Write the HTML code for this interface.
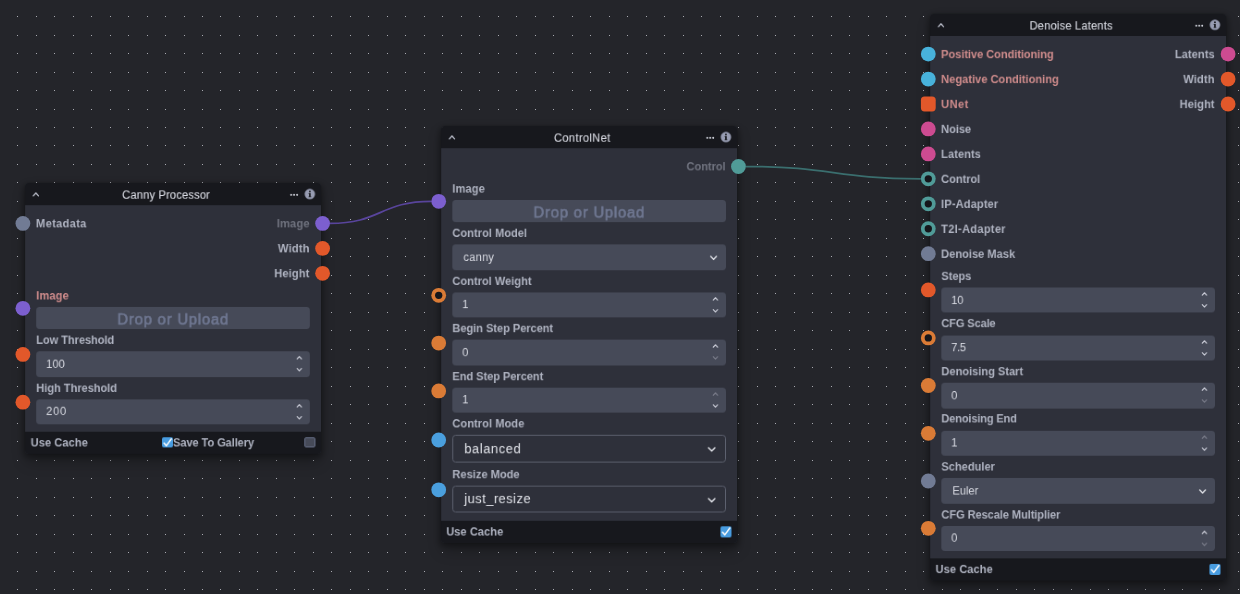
<!DOCTYPE html>
<html lang="en"><head><meta charset="utf-8"><title>Workflow Editor</title>
<style>

*{box-sizing:border-box;margin:0;padding:0}
html,body{width:1240px;height:594px;overflow:hidden;background:#24252a}
body{position:relative;font-family:"Liberation Sans",sans-serif;color:#afb3c1}
svg.bg,svg.edges{position:absolute;left:0;top:0;width:1240px;height:594px}
.vp{position:absolute;left:0;top:0;width:0;height:0;transform-origin:0 0;will-change:transform}


.node{position:absolute;left:0;top:0;background:#2e303a;font-size:12.006px;width:319.632px;border-radius:4.002px;box-shadow:0 0 0 0.541px rgba(0,0,0,.1),0 2.163px 6.49px 1.082px rgba(0,0,0,.3),0 8.653px 16.225px rgba(0,0,0,.24)}
.hdr{position:relative;height:24px;background:#17181d;border-radius:4.002px 4.002px 0 0}
.hdr .ttl{position:absolute;left:0;right:14.819px;top:0;height:24px;line-height:26.933px;text-align:center;font-size:12.006px;-webkit-text-stroke:0.13px #d6d8e0;color:#d6d8e0;white-space:nowrap}
.hdr svg{position:absolute;overflow:visible}
.body{background:#2e303a;padding:6px 0 5.949px;position:relative}
.row{position:relative;height:27px;display:flex;align-items:center;justify-content:space-between;padding:0 12.006px 0 11.844px;font-weight:700;white-space:nowrap}
.row span{display:block;line-height:17.307px;position:relative;top:1.082px}
.dim{opacity:.5}
.err{color:#cf8c8c}
.h{position:absolute;width:16px;height:16px;border-radius:50%;top:50%;margin-top:-8.5px}
.fld .h{margin-top:-8.275px}
.h.l{left:-10.276px}
.h.r{right:-10.059px}
.h.ring{background:#1b1c21 !important;border:4.651px solid}
.h.sq{border-radius:3.245px}
.fld{position:relative;padding:0 11.628px 1.893px}
.row + .fld{margin-top:0.757px}
.fld .lb{height:22.228px;line-height:21.309px;font-weight:700;white-space:nowrap;margin-left:0.487px}
.fld .lb span,.val span,.ftr span,.ttl span,.drop span{display:inline-block}
.in{position:relative;height:27.474px;background:#464a58;border-radius:3.678px}
.in .val{position:absolute;left:11.141px;top:0.541px;line-height:27.474px;color:#d9dbe3;white-space:nowrap}
.in.sel .val{left:12.439px}
.in svg{position:absolute;overflow:visible}
.drop{height:24.554px;margin-top:-0.216px;margin-bottom:-0.216px;background:#464a58;border-radius:3.678px;text-align:center;font-size:16.009px;line-height:27.366px;color:#6f7791;-webkit-text-stroke:0.703px #6f7791;white-space:nowrap;overflow:hidden;font-weight:400}
.nsel{position:relative;margin-top:-0.487px;margin-bottom:1.082px;height:29.854px;border:1.028px solid #5d616f;border-radius:3.678px;background:#2e303a}
.nsel .val{position:absolute;left:12.331px;top:-0.216px;line-height:29.746px;font-size:13.953px;color:#e2e4ea;white-space:nowrap}
.nsel svg{position:absolute;overflow:visible}
.ftr{position:relative;height:23.58px;background:#17181d;border-radius:0 0 4.002px 4.002px;font-weight:700;white-space:nowrap}
.ftr .t{position:absolute;top:0.541px;line-height:23.58px}
.cb{position:absolute;top:5.733px;width:11.682px;height:11.682px;border-radius:1.947px}
.cb.on{background:#489ce0}
.cb.off{background:#464a58;border:1.839px solid #687089}
.cb svg{position:absolute;left:0;top:0;width:11.682px;height:11.682px;overflow:visible}

</style></head><body>
<svg class="bg" shape-rendering="crispEdges"><defs><path id="dc" d="M0 16h1v1h-1zM0 35h1v1h-1zM0 53h1v1h-1zM0 72h1v1h-1zM0 90h1v1h-1zM0 109h1v1h-1zM0 127h1v1h-1zM0 145h1v1h-1zM0 164h1v1h-1zM0 182h1v1h-1zM0 201h1v1h-1zM0 219h1v1h-1zM0 238h1v1h-1zM0 256h1v1h-1zM0 275h1v1h-1zM0 293h1v1h-1zM0 312h1v1h-1zM0 330h1v1h-1zM0 349h1v1h-1zM0 367h1v1h-1zM0 386h1v1h-1zM0 404h1v1h-1zM0 423h1v1h-1zM0 441h1v1h-1zM0 460h1v1h-1zM0 478h1v1h-1zM0 497h1v1h-1zM0 515h1v1h-1zM0 534h1v1h-1zM0 552h1v1h-1zM0 571h1v1h-1zM0 589h1v1h-1z" fill="#a9aab1"></path></defs><use href="#dc" x="17"></use><use href="#dc" x="36"></use><use href="#dc" x="54"></use><use href="#dc" x="73"></use><use href="#dc" x="91"></use><use href="#dc" x="110"></use><use href="#dc" x="128"></use><use href="#dc" x="147"></use><use href="#dc" x="165"></use><use href="#dc" x="184"></use><use href="#dc" x="202"></use><use href="#dc" x="220"></use><use href="#dc" x="239"></use><use href="#dc" x="257"></use><use href="#dc" x="276"></use><use href="#dc" x="294"></use><use href="#dc" x="313"></use><use href="#dc" x="331"></use><use href="#dc" x="350"></use><use href="#dc" x="368"></use><use href="#dc" x="387"></use><use href="#dc" x="405"></use><use href="#dc" x="424"></use><use href="#dc" x="442"></use><use href="#dc" x="461"></use><use href="#dc" x="479"></use><use href="#dc" x="498"></use><use href="#dc" x="516"></use><use href="#dc" x="535"></use><use href="#dc" x="553"></use><use href="#dc" x="572"></use><use href="#dc" x="590"></use><use href="#dc" x="609"></use><use href="#dc" x="627"></use><use href="#dc" x="646"></use><use href="#dc" x="664"></use><use href="#dc" x="683"></use><use href="#dc" x="701"></use><use href="#dc" x="720"></use><use href="#dc" x="738"></use><use href="#dc" x="757"></use><use href="#dc" x="775"></use><use href="#dc" x="794"></use><use href="#dc" x="812"></use><use href="#dc" x="831"></use><use href="#dc" x="849"></use><use href="#dc" x="868"></use><use href="#dc" x="886"></use><use href="#dc" x="905"></use><use href="#dc" x="923"></use><use href="#dc" x="942"></use><use href="#dc" x="960"></use><use href="#dc" x="979"></use><use href="#dc" x="997"></use><use href="#dc" x="1016"></use><use href="#dc" x="1034"></use><use href="#dc" x="1053"></use><use href="#dc" x="1071"></use><use href="#dc" x="1090"></use><use href="#dc" x="1108"></use><use href="#dc" x="1127"></use><use href="#dc" x="1145"></use><use href="#dc" x="1164"></use><use href="#dc" x="1182"></use><use href="#dc" x="1201"></use><use href="#dc" x="1219"></use><use href="#dc" x="1238"></use></svg>
<div class="vp" style="transform:translate(25.1px,183.0px) scale(0.9245)"><div class="node"><div class="hdr"><svg viewBox="0 0 295.5 21.6" style="width:319.632px;height:23.364px;left:0;top:0.324px"><path d="M8.20 12.85L10.75 9.95L13.30 12.85" fill="none" stroke="#c0c3d0" stroke-width="1.2" stroke-linecap="round" stroke-linejoin="round"></path><circle cx="266.10" cy="11.9" r="0.95" fill="#d5d7e0"></circle><circle cx="269.05" cy="11.9" r="0.95" fill="#d5d7e0"></circle><circle cx="272.00" cy="11.9" r="0.95" fill="#d5d7e0"></circle><circle cx="284.75" cy="11.05" r="5.2" fill="#979cb2"></circle><circle cx="284.75" cy="8.600000000000001" r="0.95" fill="#17181d"></circle><path d="M283.45 10.15H285.55V13.35H286.10V14.15H283.40V13.35H283.95V10.95H283.45Z" fill="#17181d"></path></svg><div class="ttl"><span style="letter-spacing: 0.189px; margin-right: -0.189px;">Canny Processor</span></div></div><div class="body"><div class="row"><span style="letter-spacing: 0.333px; margin-right: -0.333px;">Metadata</span><span class="dim" style="letter-spacing: 0.155px; margin-right: -0.155px;">Image</span></div><div class="row"><span></span><span style="letter-spacing: 0.225px; margin-right: -0.225px;">Width</span></div><div class="row"><span></span><span style="letter-spacing: 0.177px; margin-right: -0.177px;">Height</span></div><div class="fld"><div class="lb"><span class="err" style="letter-spacing: 0.101px; margin-right: -0.101px;">Image</span></div><div class="drop"><span style="letter-spacing: 0.878px; margin-right: -0.878px;">Drop or Upload</span></div></div><div class="fld"><div class="lb"><span style="letter-spacing: -0.086px; margin-right: 0.086px;">Low Threshold</span></div><div class="in"><div class="val"><span style="letter-spacing: 0.067px; margin-right: -0.067px;">100</span></div><svg viewBox="0 0 20 25.4" style="width:21.633px;height:27.474px;right:0;top:0"><path d="M7.65 7.62L9.80 5.28L11.95 7.62" fill="none" stroke="#ccced9" stroke-width="1.1" stroke-linecap="round" stroke-linejoin="round"></path><path d="M7.65 17.27L9.80 19.62L11.95 17.27" fill="none" stroke="#ccced9" stroke-width="1.1" stroke-linecap="round" stroke-linejoin="round"></path></svg></div></div><div class="fld"><div class="lb"><span style="letter-spacing: -0.051px; margin-right: 0.051px;">High Threshold</span></div><div class="in"><div class="val"><span style="letter-spacing: 0.879px; margin-right: -0.879px;">200</span></div><svg viewBox="0 0 20 25.4" style="width:21.633px;height:27.474px;right:0;top:0"><path d="M7.65 7.62L9.80 5.28L11.95 7.62" fill="none" stroke="#ccced9" stroke-width="1.1" stroke-linecap="round" stroke-linejoin="round"></path><path d="M7.65 17.27L9.80 19.62L11.95 17.27" fill="none" stroke="#ccced9" stroke-width="1.1" stroke-linecap="round" stroke-linejoin="round"></path></svg></div></div></div><div class="ftr"><div class="t" style="left:5.949px"><span style="letter-spacing: 0.081px; margin-right: -0.081px;">Use Cache</span></div><i class="cb on" style="left:148.296px"><svg viewBox="0 0 11 11"><path d="M2.1 5.9L4.5 8.6L9.6 1.6" fill="none" stroke="#fff" stroke-width="1.45" stroke-linecap="round" stroke-linejoin="round"></path></svg></i><div class="t" style="left:160.087px"><span style="letter-spacing: -0.114px; margin-right: 0.114px;">Save To Gallery</span></div><i class="cb off" style="left:302.001px"></i></div></div></div><div class="vp" style="transform:translate(441.2px,126.0px) scale(0.9245)"><div class="node"><div class="hdr"><svg viewBox="0 0 295.5 21.6" style="width:319.632px;height:23.364px;left:0;top:0.324px"><path d="M8.20 12.85L10.75 9.95L13.30 12.85" fill="none" stroke="#c0c3d0" stroke-width="1.2" stroke-linecap="round" stroke-linejoin="round"></path><circle cx="266.10" cy="11.9" r="0.95" fill="#d5d7e0"></circle><circle cx="269.05" cy="11.9" r="0.95" fill="#d5d7e0"></circle><circle cx="272.00" cy="11.9" r="0.95" fill="#d5d7e0"></circle><circle cx="284.75" cy="11.05" r="5.2" fill="#979cb2"></circle><circle cx="284.75" cy="8.600000000000001" r="0.95" fill="#17181d"></circle><path d="M283.45 10.15H285.55V13.35H286.10V14.15H283.40V13.35H283.95V10.95H283.45Z" fill="#17181d"></path></svg><div class="ttl"><span style="letter-spacing: 0.386px; margin-right: -0.386px;">ControlNet</span></div></div><div class="body"><div class="row"><span></span><span class="dim" style="letter-spacing: -0.053px; margin-right: 0.053px;">Control</span></div><div class="fld"><div class="lb"><span style="letter-spacing: 0.101px; margin-right: -0.101px;">Image</span></div><div class="drop"><span style="letter-spacing: 0.878px; margin-right: -0.878px;">Drop or Upload</span></div></div><div class="fld"><div class="lb"><span style="letter-spacing: 0.007px; margin-right: -0.007px;">Control Model</span></div><div class="in sel"><div class="val"><span style="letter-spacing: 0.252px; margin-right: -0.252px;">canny</span></div><svg viewBox="0 0 24 25.4" style="width:25.96px;height:27.474px;right:0;top:0"><path d="M8.80 12.10L11.65 15.10L14.50 12.10" fill="none" stroke="#e4e6ec" stroke-width="1.3" stroke-linecap="round" stroke-linejoin="round"></path></svg></div></div><div class="fld"><div class="lb"><span style="letter-spacing: -0.012px; margin-right: 0.012px;">Control Weight</span></div><div class="in"><div class="val"><span>1</span></div><svg viewBox="0 0 20 25.4" style="width:21.633px;height:27.474px;right:0;top:0"><path d="M7.65 7.62L9.80 5.28L11.95 7.62" fill="none" stroke="#ccced9" stroke-width="1.1" stroke-linecap="round" stroke-linejoin="round"></path><path d="M7.65 17.27L9.80 19.62L11.95 17.27" fill="none" stroke="#ccced9" stroke-width="1.1" stroke-linecap="round" stroke-linejoin="round"></path></svg></div></div><div class="fld"><div class="lb"><span style="letter-spacing: -0.062px; margin-right: 0.062px;">Begin Step Percent</span></div><div class="in"><div class="val"><span>0</span></div><svg viewBox="0 0 20 25.4" style="width:21.633px;height:27.474px;right:0;top:0"><path d="M7.65 7.62L9.80 5.28L11.95 7.62" fill="none" stroke="#ccced9" stroke-width="1.1" stroke-linecap="round" stroke-linejoin="round"></path><path d="M7.65 17.27L9.80 19.62L11.95 17.27" fill="none" stroke="#ccced9" stroke-width="1.1" stroke-linecap="round" stroke-linejoin="round" opacity="0.4"></path></svg></div></div><div class="fld"><div class="lb"><span style="letter-spacing: -0.073px; margin-right: 0.073px;">End Step Percent</span></div><div class="in"><div class="val"><span>1</span></div><svg viewBox="0 0 20 25.4" style="width:21.633px;height:27.474px;right:0;top:0"><path d="M7.65 7.62L9.80 5.28L11.95 7.62" fill="none" stroke="#ccced9" stroke-width="1.1" stroke-linecap="round" stroke-linejoin="round" opacity="0.4"></path><path d="M7.65 17.27L9.80 19.62L11.95 17.27" fill="none" stroke="#ccced9" stroke-width="1.1" stroke-linecap="round" stroke-linejoin="round"></path></svg></div></div><div class="fld"><div class="lb"><span style="letter-spacing: 0.035px; margin-right: -0.035px;">Control Mode</span></div><div class="nsel"><div class="val"><span style="letter-spacing: 0.632px; margin-right: -0.632px;">balanced</span></div><svg viewBox="0 0 24 27.5" style="width:25.96px;height:29.746px;right:0;top:-1.082px"><path d="M7.50 12.95L10.70 16.25L13.90 12.95" fill="none" stroke="#e4e6ec" stroke-width="1.35" stroke-linecap="round" stroke-linejoin="round"></path></svg></div></div><div class="fld"><div class="lb"><span style="letter-spacing: -0.006px; margin-right: 0.006px;">Resize Mode</span></div><div class="nsel"><div class="val"><span style="letter-spacing: 0.509px; margin-right: -0.509px;">just_resize</span></div><svg viewBox="0 0 24 27.5" style="width:25.96px;height:29.746px;right:0;top:-1.082px"><path d="M7.50 12.95L10.70 16.25L13.90 12.95" fill="none" stroke="#e4e6ec" stroke-width="1.35" stroke-linecap="round" stroke-linejoin="round"></path></svg></div></div></div><div class="ftr"><div class="t" style="left:5.408px"><span style="letter-spacing: 0.041px; margin-right: -0.041px;">Use Cache</span></div><i class="cb on" style="left:302.217px"><svg viewBox="0 0 11 11"><path d="M2.1 5.9L4.5 8.6L9.6 1.6" fill="none" stroke="#fff" stroke-width="1.45" stroke-linecap="round" stroke-linejoin="round"></path></svg></i></div></div></div><div class="vp" style="transform:translate(930.2px,13.8px) scale(0.9245)"><div class="node"><div class="hdr"><svg viewBox="0 0 295.5 21.6" style="width:319.632px;height:23.364px;left:0;top:0.324px"><path d="M8.20 12.85L10.75 9.95L13.30 12.85" fill="none" stroke="#c0c3d0" stroke-width="1.2" stroke-linecap="round" stroke-linejoin="round"></path><circle cx="266.10" cy="11.9" r="0.95" fill="#d5d7e0"></circle><circle cx="269.05" cy="11.9" r="0.95" fill="#d5d7e0"></circle><circle cx="272.00" cy="11.9" r="0.95" fill="#d5d7e0"></circle><circle cx="284.75" cy="11.05" r="5.2" fill="#979cb2"></circle><circle cx="284.75" cy="8.600000000000001" r="0.95" fill="#17181d"></circle><path d="M283.45 10.15H285.55V13.35H286.10V14.15H283.40V13.35H283.95V10.95H283.45Z" fill="#17181d"></path></svg><div class="ttl"><span style="letter-spacing: 0.221px; margin-right: -0.221px;">Denoise Latents</span></div></div><div class="body"><div class="row"><span class="err" style="letter-spacing: -0.074px; margin-right: 0.074px;">Positive Conditioning</span><span style="letter-spacing: 0.032px; margin-right: -0.032px;">Latents</span></div><div class="row"><span class="err" style="letter-spacing: -0.005px; margin-right: 0.005px;">Negative Conditioning</span><span style="letter-spacing: 0.171px; margin-right: -0.171px;">Width</span></div><div class="row"><span class="err" style="letter-spacing: 0.448px; margin-right: -0.448px;">UNet</span><span style="letter-spacing: 0.112px; margin-right: -0.112px;">Height</span></div><div class="row"><span style="letter-spacing: -0.075px; margin-right: 0.075px;">Noise</span></div><div class="row"><span style="letter-spacing: 0.032px; margin-right: -0.032px;">Latents</span></div><div class="row"><span style="letter-spacing: -0.053px; margin-right: 0.053px;">Control</span></div><div class="row"><span style="letter-spacing: 0.113px; margin-right: -0.113px;">IP-Adapter</span></div><div class="row"><span style="letter-spacing: 0.302px; margin-right: -0.302px;">T2I-Adapter</span></div><div class="row"><span style="letter-spacing: -0.006px; margin-right: 0.006px;">Denoise Mask</span></div><div class="fld"><div class="lb"><span style="letter-spacing: -0.075px; margin-right: 0.075px;">Steps</span></div><div class="in"><div class="val"><span style="letter-spacing: -0.224px; margin-right: 0.224px;">10</span></div><svg viewBox="0 0 20 25.4" style="width:21.633px;height:27.474px;right:0;top:0"><path d="M7.65 7.62L9.80 5.28L11.95 7.62" fill="none" stroke="#ccced9" stroke-width="1.1" stroke-linecap="round" stroke-linejoin="round"></path><path d="M7.65 17.27L9.80 19.62L11.95 17.27" fill="none" stroke="#ccced9" stroke-width="1.1" stroke-linecap="round" stroke-linejoin="round"></path></svg></div></div><div class="fld"><div class="lb"><span style="letter-spacing: -0.17px; margin-right: 0.17px;">CFG Scale</span></div><div class="in"><div class="val"><span style="letter-spacing: -0.37px; margin-right: 0.37px;">7.5</span></div><svg viewBox="0 0 20 25.4" style="width:21.633px;height:27.474px;right:0;top:0"><path d="M7.65 7.62L9.80 5.28L11.95 7.62" fill="none" stroke="#ccced9" stroke-width="1.1" stroke-linecap="round" stroke-linejoin="round"></path><path d="M7.65 17.27L9.80 19.62L11.95 17.27" fill="none" stroke="#ccced9" stroke-width="1.1" stroke-linecap="round" stroke-linejoin="round"></path></svg></div></div><div class="fld"><div class="lb"><span style="letter-spacing: -0.019px; margin-right: 0.019px;">Denoising Start</span></div><div class="in"><div class="val"><span>0</span></div><svg viewBox="0 0 20 25.4" style="width:21.633px;height:27.474px;right:0;top:0"><path d="M7.65 7.62L9.80 5.28L11.95 7.62" fill="none" stroke="#ccced9" stroke-width="1.1" stroke-linecap="round" stroke-linejoin="round"></path><path d="M7.65 17.27L9.80 19.62L11.95 17.27" fill="none" stroke="#ccced9" stroke-width="1.1" stroke-linecap="round" stroke-linejoin="round" opacity="0.4"></path></svg></div></div><div class="fld"><div class="lb"><span style="letter-spacing: -0.2px; margin-right: 0.2px;">Denoising End</span></div><div class="in"><div class="val"><span>1</span></div><svg viewBox="0 0 20 25.4" style="width:21.633px;height:27.474px;right:0;top:0"><path d="M7.65 7.62L9.80 5.28L11.95 7.62" fill="none" stroke="#ccced9" stroke-width="1.1" stroke-linecap="round" stroke-linejoin="round" opacity="0.4"></path><path d="M7.65 17.27L9.80 19.62L11.95 17.27" fill="none" stroke="#ccced9" stroke-width="1.1" stroke-linecap="round" stroke-linejoin="round"></path></svg></div></div><div class="fld"><div class="lb"><span style="letter-spacing: -0.014px; margin-right: 0.014px;">Scheduler</span></div><div class="in sel"><div class="val"><span style="letter-spacing: -0.042px; margin-right: 0.042px;">Euler</span></div><svg viewBox="0 0 24 25.4" style="width:25.96px;height:27.474px;right:0;top:0"><path d="M8.80 12.10L11.65 15.10L14.50 12.10" fill="none" stroke="#e4e6ec" stroke-width="1.3" stroke-linecap="round" stroke-linejoin="round"></path></svg></div></div><div class="fld"><div class="lb"><span style="letter-spacing: -0.097px; margin-right: 0.097px;">CFG Rescale Multiplier</span></div><div class="in"><div class="val"><span>0</span></div><svg viewBox="0 0 20 25.4" style="width:21.633px;height:27.474px;right:0;top:0"><path d="M7.65 7.62L9.80 5.28L11.95 7.62" fill="none" stroke="#ccced9" stroke-width="1.1" stroke-linecap="round" stroke-linejoin="round"></path><path d="M7.65 17.27L9.80 19.62L11.95 17.27" fill="none" stroke="#ccced9" stroke-width="1.1" stroke-linecap="round" stroke-linejoin="round" opacity="0.4"></path></svg></div></div></div><div class="ftr"><div class="t" style="left:5.841px"><span style="letter-spacing: 0.054px; margin-right: -0.054px;">Use Cache</span></div><i class="cb on" style="left:302.434px"><svg viewBox="0 0 11 11"><path d="M2.1 5.9L4.5 8.6L9.6 1.6" fill="none" stroke="#fff" stroke-width="1.45" stroke-linecap="round" stroke-linejoin="round"></path></svg></i></div></div></div>
<svg class="edges"><path d="M330.0 223.45C380.65 223.45 380.65 201.3 431.3 201.3" fill="none" stroke="#58449b" stroke-width="1.75"></path><path d="M745.8 166.5C833.35 166.5 833.35 178.9 920.9 178.9" fill="none" stroke="#3a6e6e" stroke-width="1.75"></path><circle cx="22.9" cy="223.45" r="7.4" fill="#717b94"></circle><circle cx="22.9" cy="308.3" r="7.4" fill="#7c5fcf"></circle><circle cx="22.9" cy="354.4" r="7.4" fill="#e2582a"></circle><circle cx="22.9" cy="402.2" r="7.4" fill="#e2582a"></circle><circle cx="322.6" cy="223.45" r="7.4" fill="#7c5fcf"></circle><circle cx="322.6" cy="248.4" r="7.4" fill="#e2582a"></circle><circle cx="322.6" cy="273.3" r="7.4" fill="#e2582a"></circle><circle cx="438.7" cy="201.3" r="7.4" fill="#7c5fcf"></circle><circle cx="438.7" cy="295.3" r="7.4" fill="#da7b36"></circle><circle cx="438.7" cy="295.3" r="3.65" fill="#15161b"></circle><circle cx="438.7" cy="343.1" r="7.4" fill="#da7b36"></circle><circle cx="438.7" cy="390.9" r="7.4" fill="#da7b36"></circle><circle cx="438.7" cy="440.0" r="7.4" fill="#4a9fde"></circle><circle cx="438.7" cy="489.8" r="7.4" fill="#4a9fde"></circle><circle cx="738.45" cy="166.5" r="7.4" fill="#509b98"></circle><circle cx="928.3" cy="54.1" r="7.4" fill="#48b2db"></circle><circle cx="928.3" cy="79.05" r="7.4" fill="#48b2db"></circle><rect x="920.90" y="96.60" width="14.8" height="14.8" rx="3.6" fill="#e2582a"></rect><circle cx="928.3" cy="128.95" r="7.4" fill="#cd4b91"></circle><circle cx="928.3" cy="153.9" r="7.4" fill="#cd4b91"></circle><circle cx="928.3" cy="178.85" r="7.4" fill="#509b98"></circle><circle cx="928.3" cy="178.85" r="3.65" fill="#15161b"></circle><circle cx="928.3" cy="203.8" r="7.4" fill="#509b98"></circle><circle cx="928.3" cy="203.8" r="3.65" fill="#15161b"></circle><circle cx="928.3" cy="228.75" r="7.4" fill="#509b98"></circle><circle cx="928.3" cy="228.75" r="3.65" fill="#15161b"></circle><circle cx="928.3" cy="253.7" r="7.4" fill="#717b94"></circle><circle cx="928.3" cy="289.9" r="7.4" fill="#e2582a"></circle><circle cx="928.3" cy="337.9" r="7.4" fill="#da7b36"></circle><circle cx="928.3" cy="337.9" r="3.65" fill="#15161b"></circle><circle cx="928.3" cy="385.5" r="7.4" fill="#da7b36"></circle><circle cx="928.3" cy="433.3" r="7.4" fill="#da7b36"></circle><circle cx="928.3" cy="481.0" r="7.4" fill="#717b94"></circle><circle cx="928.3" cy="528.3" r="7.4" fill="#da7b36"></circle><circle cx="1228.1" cy="54.1" r="7.4" fill="#cd4b91"></circle><circle cx="1228.1" cy="79.05" r="7.4" fill="#e2582a"></circle><circle cx="1228.1" cy="104.0" r="7.4" fill="#e2582a"></circle></svg>
</body></html>
